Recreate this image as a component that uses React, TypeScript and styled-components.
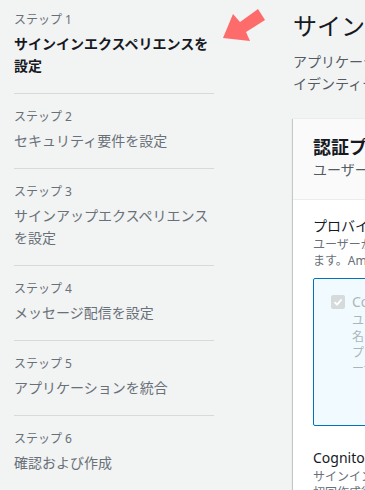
import styled, { createGlobalStyle } from "styled-components";

const GlobalStyle = createGlobalStyle`
  html, body {
    margin: 0;
    padding: 0;
    background: #f2f3f3;
    overflow: hidden;
  }
  body {
    font-family: "Noto Sans", "Noto Sans CJK JP", sans-serif;
    color: #16191f;
  }
`;

interface Step {
  label: string;
  title: string;
}

const steps: Step[] = [
  { label: "ステップ 1", title: "サインインエクスペリエンスを設定" },
  { label: "ステップ 2", title: "セキュリティ要件を設定" },
  { label: "ステップ 3", title: "サインアップエクスペリエンスを設定" },
  { label: "ステップ 4", title: "メッセージ配信を設定" },
  { label: "ステップ 5", title: "アプリケーションを統合" },
  { label: "ステップ 6", title: "確認および作成" },
];

const App = () => {
  return (
    <>
      <GlobalStyle />
      <Page>
        <Sidebar>
          {steps.map((step, index) => (
            <StepItem key={step.label} last={index === steps.length - 1}>
              <StepLabel>{step.label}</StepLabel>
              <StepTitle active={index === 0}>{step.title}</StepTitle>
            </StepItem>
          ))}
          <Arrow width="50" height="40" viewBox="0 0 50 40">
            <polygon points="3,36 13,12 20,20 38,7 45,18 26,30 30,39" fill="#fd6b6b" />
          </Arrow>
        </Sidebar>

        <Main>
          <PageTitle>サインインエクスペリエンスを設定</PageTitle>
          <PageDesc>
            アプリケーションのユーザーがサインインする方法を設定します。フェデレーション ア
            <br />
            イデンティティプロバイダーを追加して、ユーザーがソーシャルアカウントでサインインできるようにします。
          </PageDesc>

          <Card>
            <CardHeader>
              <CardTitle>認証プロバイダー</CardTitle>
              <CardSub>ユーザーがサインインに使用できるプロバイダーを設定します。</CardSub>
            </CardHeader>
            <CardBody>
              <FieldLabel>プロバイダーのタイプ</FieldLabel>
              <FieldDesc>
                ユーザーがサインインに使用できるプロバイダーのタイプを選択し
                <br />
                ます。Amazon Cognito ユーザープールは常に有効です。
              </FieldDesc>

              <Tile>
                <CheckBox>
                  <svg width="10" height="10" viewBox="0 0 10 10">
                    <path d="M1.5 5.2 L4 7.6 L8.6 2.4" stroke="#fff" strokeWidth="1.8" fill="none" />
                  </svg>
                </CheckBox>
                <TileText>
                  <TileTitle>Cognito ユーザープール</TileTitle>
                  <TileDesc>
                    ユーザーは E メールアドレス、電話番号、ユーザー
                    <br />
                    名を使用してサインインできます。ユーザーは
                    <br />
                    プール内のディレクトリに保存されます。この
                    <br />
                    ーザープールは常に有効です。
                  </TileDesc>
                </TileText>
              </Tile>

              <FieldLabel spaced>Cognito ユーザープールのサインインオプション</FieldLabel>
              <FieldDesc>
                サインインに使用する属性を選択します。
                <br />
                初回作成後は変更できません。
              </FieldDesc>
            </CardBody>
          </Card>
        </Main>
      </Page>
    </>
  );
};

const Page = styled.div`
  display: flex;
  width: 900px;
  min-height: 490px;
`;

const Sidebar = styled.nav`
  position: relative;
  width: 279px;
  flex-shrink: 0;
  box-sizing: border-box;
  padding: 12px 0 0 14px;
`;

const StepItem = styled.div<{ last: boolean }>`
  width: 200px;
  padding-bottom: 16px;
  margin-bottom: 15px;
  border-bottom: ${(p) => (p.last ? "none" : "1px solid #d5dbdb")};
`;

const StepLabel = styled.div`
  font-size: 12px;
  line-height: 16px;
  color: #687078;
  margin-bottom: 5px;
`;

const StepTitle = styled.div<{ active: boolean }>`
  font-size: 14px;
  line-height: 22px;
  color: ${(p) => (p.active ? "#16191f" : "#687078")};
  font-weight: ${(p) => (p.active ? 700 : 400)};
`;

const Arrow = styled.svg`
  position: absolute;
  left: 220px;
  top: 2px;
`;

const Main = styled.main`
  flex: 1;
  padding-top: 10px;
  padding-left: 14px;
`;

const PageTitle = styled.h1`
  margin: 0;
  font-size: 24px;
  line-height: 32px;
  font-weight: 400;
  color: #16191f;
`;

const PageDesc = styled.p`
  margin: 9px 0 0;
  font-size: 14px;
  line-height: 22px;
  color: #545b64;
  white-space: nowrap;
`;

const Card = styled.section`
  margin-top: 23px;
  background: #fff;
  border-top: 1px solid #eaeded;
  box-shadow: 0 1px 1px 0 rgba(0, 28, 36, 0.3), 1px 1px 1px 0 rgba(0, 28, 36, 0.15),
    -1px 1px 1px 0 rgba(0, 28, 36, 0.15);
`;

const CardHeader = styled.header`
  background: #fafafa;
  border-bottom: 1px solid #eaeded;
  padding: 16px 20px 19px;
`;

const CardTitle = styled.h2`
  margin: 0;
  font-size: 18px;
  line-height: 24px;
  font-weight: 700;
`;

const CardSub = styled.div`
  margin-top: 1px;
  font-size: 14px;
  line-height: 20px;
  color: #545b64;
  white-space: nowrap;
`;

const CardBody = styled.div`
  padding: 15px 20px 20px;
`;

const FieldLabel = styled.div<{ spaced?: boolean }>`
  margin-top: ${(p) => (p.spaced ? "21px" : "0")};
  font-size: 14px;
  line-height: 22px;
  color: #16191f;
  white-space: nowrap;
`;

const FieldDesc = styled.div`
  font-size: 12px;
  line-height: 16px;
  color: #687078;
  white-space: nowrap;
`;

const Tile = styled.div`
  margin-top: 9px;
  display: flex;
  gap: 7px;
  align-items: flex-start;
  border: 1px solid #0073bb;
  border-radius: 2px;
  background: #f1faff;
  padding: 16px 16px 48px 17px;
`;

const CheckBox = styled.span`
  display: flex;
  align-items: center;
  justify-content: center;
  flex-shrink: 0;
  width: 14px;
  height: 14px;
  border-radius: 2px;
  background: #d5dbdb;
  margin-top: 0px;
`;

const TileText = styled.div`
  margin-top: -4px;
`;

const TileTitle = styled.div`
  font-size: 14px;
  line-height: 22px;
  color: #aab7b8;
  white-space: nowrap;
`;

const TileDesc = styled.div`
  font-size: 12px;
  line-height: 16px;
  color: #aab7b8;
  white-space: nowrap;
`;

export default App;
